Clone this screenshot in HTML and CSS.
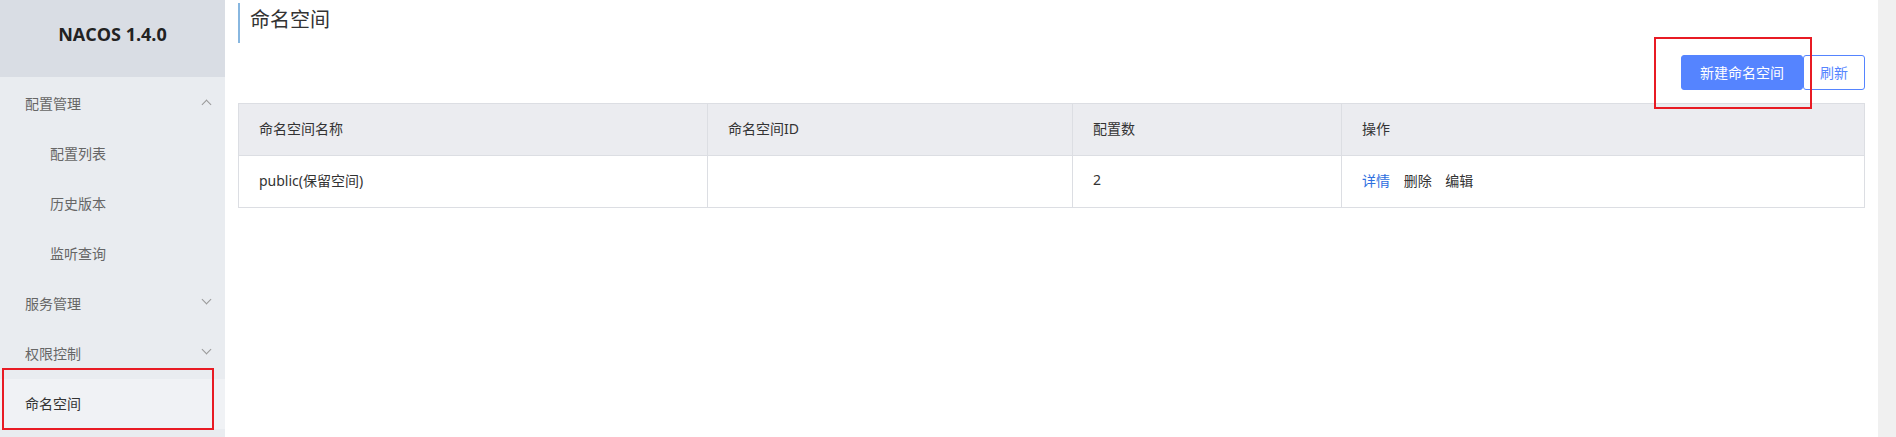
FILE: index.html
```html
<!DOCTYPE html>
<html lang="zh-CN">
<head>
    <meta charset="UTF-8">
    <title>Nacos - 命名空间</title>
    <link rel="stylesheet" href="styles.css">
</head>
<body>
    <div class="app">
        <aside class="sidebar">
            <div class="brand">NACOS 1.4.0</div>
            <ul class="menu">
                <li class="menu-item">配置管理<span class="arrow up"></span></li>
                <li class="menu-item sub">配置列表</li>
                <li class="menu-item sub">历史版本</li>
                <li class="menu-item sub">监听查询</li>
                <li class="menu-item">服务管理<span class="arrow"></span></li>
                <li class="menu-item">权限控制<span class="arrow"></span></li>
                <li class="menu-item active">命名空间</li>
            </ul>
        </aside>

        <main class="main">
            <h2 class="page-title">命名空间</h2>

            <div class="toolbar">
                <button class="btn btn-primary">新建命名空间</button>
                <button class="btn btn-normal">刷新</button>
            </div>

            <table class="grid">
                <thead>
                    <tr>
                        <th class="col-name">命名空间名称</th>
                        <th class="col-id">命名空间ID</th>
                        <th class="col-count">配置数</th>
                        <th>操作</th>
                    </tr>
                </thead>
                <tbody>
                    <tr>
                        <td>public(保留空间)</td>
                        <td></td>
                        <td>2</td>
                        <td class="actions">
                            <a class="link">详情</a>
                            <span>删除</span>
                            <span>编辑</span>
                        </td>
                    </tr>
                </tbody>
            </table>
        </main>

        <div class="scroll-strip"></div>
    </div>

    <!-- annotation boxes from the screenshot -->
    <div class="mark mark-menu"></div>
    <div class="mark mark-btn"></div>
</body>
</html>
```

FILE: styles.css
```css
* {
    box-sizing: border-box;
}

body {
    margin: 0;
    font-family: "Noto Sans", "Noto Sans CJK SC", sans-serif;
    font-size: 14px;
    color: #333;
    background: #fff;
}

.app {
    display: flex;
    height: 437px;
    overflow: hidden;
}

.sidebar {
    width: 225px;
    flex-shrink: 0;
    background: #e9ecf0;
}

.brand {
    height: 77px;
    background: #d9dde4;
    display: flex;
    align-items: center;
    justify-content: center;
    font-family: "Open Sans", sans-serif;
    font-weight: 700;
    font-size: 18px;
    color: #222;
    padding-bottom: 10px;
}

.menu {
    list-style: none;
    margin: 0;
    padding: 2px 0 0;
}

.menu-item {
    height: 50px;
    display: flex;
    align-items: center;
    padding-left: 25px;
    padding-bottom: 3px;
    color: #666;
    position: relative;
}

.menu-item.sub {
    padding-left: 50px;
}

.menu-item.active {
    background: #f0f2f5;
    color: #333;
}

.arrow {
    position: absolute;
    right: 15px;
    top: 17px;
    width: 7px;
    height: 7px;
    border-right: 1px solid #999;
    border-bottom: 1px solid #999;
    transform: rotate(45deg);
}

.arrow.up {
    top: 22px;
    transform: rotate(-135deg);
}

.main {
    flex: 1;
    padding: 3px 13px 0;
}

.page-title {
    margin: 0;
    height: 40px;
    border-left: 2px solid #88b7e0;
    padding-left: 10px;
    font-size: 20px;
    font-weight: 400;
    line-height: 34px;
    color: #333;
}

.toolbar {
    display: flex;
    justify-content: flex-end;
    margin-top: 12px;
    height: 35px;
}

.btn {
    height: 35px;
    border-radius: 3px;
    font-family: inherit;
    font-size: 14px;
    padding: 0 0 2px;
    cursor: pointer;
}

.btn-primary {
    width: 122px;
    background: #5584ff;
    border: 1px solid #5584ff;
    color: #fff;
}

.btn-normal {
    width: 62px;
    background: #fff;
    border: 1px solid #5584ff;
    color: #5584ff;
}

.grid {
    width: 100%;
    margin-top: 13px;
    border-collapse: collapse;
    table-layout: fixed;
}

.grid th,
.grid td {
    height: 52px;
    border: 1px solid #dcdee3;
    padding: 0 20px 4px;
    text-align: left;
    font-weight: 400;
    color: #333;
}

.grid th {
    background: #ebecf0;
}

.col-name {
    width: 469px;
}

.col-id {
    width: 365px;
}

.col-count {
    width: 269px;
}

.actions span,
.actions a {
    margin-right: 10px;
}

.link {
    color: #2e6fe0;
}

.scroll-strip {
    width: 18px;
    flex-shrink: 0;
    background: #f0f0f0;
}

.mark {
    position: absolute;
    border: 2px solid #e81b24;
}

.mark-menu {
    left: 2px;
    top: 368px;
    width: 212px;
    height: 62px;
}

.mark-btn {
    left: 1654px;
    top: 37px;
    width: 158px;
    height: 72px;
}
```
